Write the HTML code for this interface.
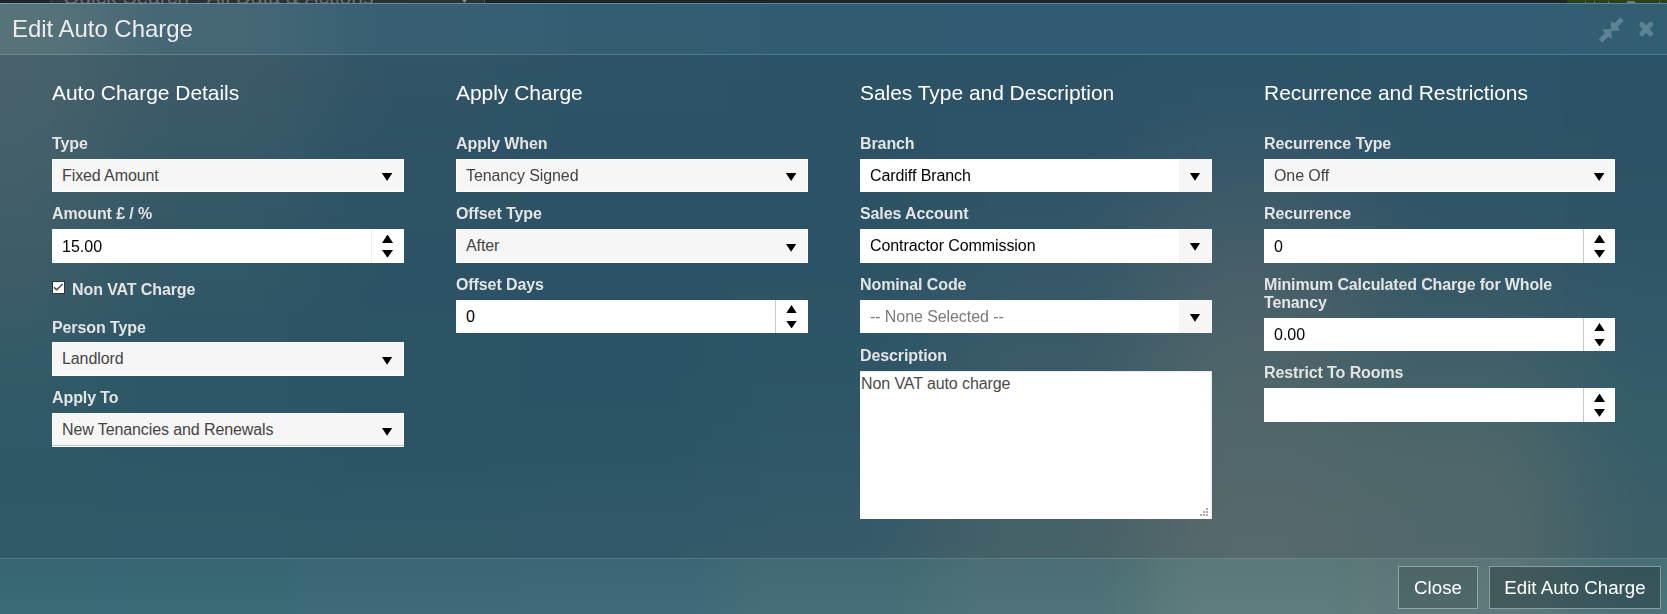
<!DOCTYPE html>
<html><head><meta charset="utf-8">
<style>
*{box-sizing:border-box;margin:0;padding:0}
html,body{width:1667px;height:614px;overflow:hidden}
body{font-family:"Liberation Sans",sans-serif;position:relative;background:#2f5467}
#top{position:absolute;left:0;top:0;width:1667px;height:3px;background:#1f2327}
#top .qs{position:absolute;left:50px;top:0;width:435px;height:3px;background:#2d3033;overflow:hidden;border-left:1px solid #3c3f42}
#top .green{position:absolute;left:1567px;top:0;width:100px;height:3px;background:#2b4013}
#tline{position:absolute;left:0;top:3px;width:1667px;height:1px;background:linear-gradient(90deg,#73a0af 0px,#6194ac 208px,#548da8 417px,#4f8ba8 625px,#4b89a8 833px,#4b89a9 1667px)}
#hline{position:absolute;left:0;top:54px;width:1667px;height:1px;background:rgba(180,210,220,0.23)}
#fline{position:absolute;left:0;top:558px;width:1667px;height:1px;background:rgba(180,210,220,0.26)}
.title{position:absolute;left:12px;top:15px;font-size:24px;line-height:28px;color:#ececec;white-space:nowrap;letter-spacing:-0.04px}
.h{position:absolute;font-size:21px;line-height:24px;color:#fff;white-space:nowrap;letter-spacing:-0.04px}
.lb{position:absolute;margin-top:1px;font-size:16px;font-weight:bold;line-height:18px;color:#e4e4e4;white-space:nowrap;letter-spacing:-0.1px}
.sel{position:absolute;width:352px;height:33px;background:#f6f6f6;border:1px solid #fff}
.sel span{position:absolute;left:9px;top:7px;font-size:16px;line-height:18px;color:#444;white-space:nowrap;letter-spacing:-0.1px}
.tri{position:absolute;width:10.6px;height:8px;background:#000;clip-path:polygon(0 0,100% 0,50% 100%)}
.sel .tri{left:328.8px;top:13px}
.num{position:absolute;width:352px;height:34px;background:#fff}
.sel.h34 .tri{top:13.8px}
.num.h33 span{top:8px}
.num.h33 .up{top:5px}
.num.h33 .dn{top:20.6px}
.num span{position:absolute;left:10px;top:9px;font-size:16px;line-height:18px;color:#000;white-space:nowrap}
.num .div{position:absolute;left:319px;top:0;width:1px;height:100%;background:#efefef}
.num.dk .div{background:#c9c9c9}
.num .up{position:absolute;left:330px;top:5.6px;width:11px;height:8.4px;background:#000;clip-path:polygon(50% 0,100% 100%,0 100%)}
.num .dn{position:absolute;left:330px;top:21px;width:11px;height:7.8px;background:#000;clip-path:polygon(0 0,100% 0,50% 100%)}
.kd{position:absolute;width:352px;height:33px;background:#fff}
.kd span{position:absolute;left:10px;top:8px;font-size:16px;line-height:18px;color:#000;white-space:nowrap;letter-spacing:-0.08px}
.kd .arr{position:absolute;left:319px;top:0;width:33px;height:100%;background:#f6f6f6}
.kd .tri{left:10.7px;top:13.8px}
.btn{position:absolute;top:566px;height:43px;border:1px solid rgba(200,215,215,0.55);color:#fff;font-size:18.7px;line-height:41px;text-align:center;white-space:nowrap}
.band{position:absolute;left:0;width:1667px;overflow:hidden}
.blur{position:absolute;left:0;top:0;width:1667px;height:100%}
.blur i{position:absolute;display:block}
</style></head><body>
<div class="band" style="top:4px;height:51px"><div class="blur" style="filter:blur(40px)">
<i style="left:-400px;top:-400px;width:505px;height:852px;background:#577379"></i>
<i style="left:104px;top:-400px;width:209px;height:852px;background:#456776"></i>
<i style="left:313px;top:-400px;width:209px;height:852px;background:#386072"></i>
<i style="left:521px;top:-400px;width:209px;height:852px;background:#335e72"></i>
<i style="left:729px;top:-400px;width:209px;height:852px;background:#305c72"></i>
<i style="left:938px;top:-400px;width:209px;height:852px;background:#2f5c73"></i>
<i style="left:1146px;top:-400px;width:209px;height:852px;background:#305c73"></i>
<i style="left:1354px;top:-400px;width:209px;height:852px;background:#305d73"></i>
<i style="left:1563px;top:-400px;width:505px;height:852px;background:#325e74"></i>
</div></div>
<div class="band" style="top:55px;height:504px"><div class="blur" style="filter:blur(45px)">
<i style="left:-400px;top:-400px;width:505px;height:456px;background:#48626a"></i>
<i style="left:104px;top:-400px;width:209px;height:456px;background:#3d5b68"></i>
<i style="left:313px;top:-400px;width:209px;height:456px;background:#325567"></i>
<i style="left:521px;top:-400px;width:209px;height:456px;background:#2f5366"></i>
<i style="left:729px;top:-400px;width:209px;height:456px;background:#2d5266"></i>
<i style="left:938px;top:-400px;width:209px;height:456px;background:#2d5266"></i>
<i style="left:1146px;top:-400px;width:209px;height:456px;background:#2d5366"></i>
<i style="left:1354px;top:-400px;width:209px;height:456px;background:#2c5366"></i>
<i style="left:1563px;top:-400px;width:505px;height:456px;background:#2b5265"></i>
<i style="left:-400px;top:55px;width:505px;height:101px;background:#43606a"></i>
<i style="left:104px;top:55px;width:209px;height:101px;background:#365867"></i>
<i style="left:313px;top:55px;width:209px;height:101px;background:#2e5365"></i>
<i style="left:521px;top:55px;width:209px;height:101px;background:#2c5265"></i>
<i style="left:729px;top:55px;width:209px;height:101px;background:#2c5265"></i>
<i style="left:938px;top:55px;width:209px;height:101px;background:#2e5366"></i>
<i style="left:1146px;top:55px;width:209px;height:101px;background:#35576a"></i>
<i style="left:1354px;top:55px;width:209px;height:101px;background:#2e5466"></i>
<i style="left:1563px;top:55px;width:505px;height:101px;background:#2c5365"></i>
<i style="left:-400px;top:155px;width:505px;height:101px;background:#3e5c68"></i>
<i style="left:104px;top:155px;width:209px;height:101px;background:#335766"></i>
<i style="left:313px;top:155px;width:209px;height:101px;background:#2c5365"></i>
<i style="left:521px;top:155px;width:209px;height:101px;background:#2b5265"></i>
<i style="left:729px;top:155px;width:209px;height:101px;background:#2c5365"></i>
<i style="left:938px;top:155px;width:209px;height:101px;background:#345768"></i>
<i style="left:1146px;top:155px;width:209px;height:101px;background:#465e68"></i>
<i style="left:1354px;top:155px;width:209px;height:101px;background:#335667"></i>
<i style="left:1563px;top:155px;width:505px;height:101px;background:#2f5567"></i>
<i style="left:-400px;top:255px;width:505px;height:101px;background:#335a68"></i>
<i style="left:104px;top:255px;width:209px;height:101px;background:#2d5666"></i>
<i style="left:313px;top:255px;width:209px;height:101px;background:#2b5465"></i>
<i style="left:521px;top:255px;width:209px;height:101px;background:#2a5465"></i>
<i style="left:729px;top:255px;width:209px;height:101px;background:#2c5566"></i>
<i style="left:938px;top:255px;width:209px;height:101px;background:#3a5a68"></i>
<i style="left:1146px;top:255px;width:209px;height:101px;background:#4d6469"></i>
<i style="left:1354px;top:255px;width:209px;height:101px;background:#405f69"></i>
<i style="left:1563px;top:255px;width:505px;height:101px;background:#335a69"></i>
<i style="left:-400px;top:355px;width:505px;height:98px;background:#2c5865"></i>
<i style="left:104px;top:355px;width:209px;height:98px;background:#2c5766"></i>
<i style="left:313px;top:355px;width:209px;height:98px;background:#2b5565"></i>
<i style="left:521px;top:355px;width:209px;height:98px;background:#2b5565"></i>
<i style="left:729px;top:355px;width:209px;height:98px;background:#2f5767"></i>
<i style="left:938px;top:355px;width:209px;height:98px;background:#435f68"></i>
<i style="left:1146px;top:355px;width:209px;height:98px;background:#52686a"></i>
<i style="left:1354px;top:355px;width:209px;height:98px;background:#4f6869"></i>
<i style="left:1563px;top:355px;width:505px;height:98px;background:#385e6a"></i>
<i style="left:-400px;top:452px;width:505px;height:452px;background:#2f5a68"></i>
<i style="left:104px;top:452px;width:209px;height:452px;background:#305a68"></i>
<i style="left:313px;top:452px;width:209px;height:452px;background:#325a69"></i>
<i style="left:521px;top:452px;width:209px;height:452px;background:#345a6a"></i>
<i style="left:729px;top:452px;width:209px;height:452px;background:#375a6a"></i>
<i style="left:938px;top:452px;width:209px;height:452px;background:#466268"></i>
<i style="left:1146px;top:452px;width:209px;height:452px;background:#58696a"></i>
<i style="left:1354px;top:452px;width:209px;height:452px;background:#52686a"></i>
<i style="left:1563px;top:452px;width:505px;height:452px;background:#3e5f68"></i>
</div></div>
<div class="band" style="top:559px;height:55px"><div class="blur" style="filter:blur(30px)">
<i style="left:-400px;top:-400px;width:505px;height:430px;background:#346571"></i>
<i style="left:104px;top:-400px;width:209px;height:430px;background:#366572"></i>
<i style="left:313px;top:-400px;width:209px;height:430px;background:#386574"></i>
<i style="left:521px;top:-400px;width:209px;height:430px;background:#396574"></i>
<i style="left:729px;top:-400px;width:209px;height:430px;background:#416973"></i>
<i style="left:938px;top:-400px;width:209px;height:430px;background:#496d73"></i>
<i style="left:1146px;top:-400px;width:209px;height:430px;background:#597776"></i>
<i style="left:1354px;top:-400px;width:209px;height:430px;background:#5a7575"></i>
<i style="left:1563px;top:-400px;width:505px;height:430px;background:#476d75"></i>
<i style="left:-400px;top:29px;width:505px;height:427px;background:#3b6c78"></i>
<i style="left:104px;top:29px;width:209px;height:427px;background:#3d6c79"></i>
<i style="left:313px;top:29px;width:209px;height:427px;background:#3f6c7b"></i>
<i style="left:521px;top:29px;width:209px;height:427px;background:#406c7b"></i>
<i style="left:729px;top:29px;width:209px;height:427px;background:#48707a"></i>
<i style="left:938px;top:29px;width:209px;height:427px;background:#50747a"></i>
<i style="left:1146px;top:29px;width:209px;height:427px;background:#607e7d"></i>
<i style="left:1354px;top:29px;width:209px;height:427px;background:#617c7c"></i>
<i style="left:1563px;top:29px;width:505px;height:427px;background:#4e747c"></i>
</div></div>
<div id="top"><div class="qs"><span style="position:absolute;left:12px;top:-15px;font-size:21px;line-height:24px;color:#6e6e6e;white-space:nowrap">Quick Search - All Data &amp; Actions</span><i style="position:absolute;left:409px;top:-3px;width:9px;height:6px;background:#8a8a8a;clip-path:polygon(0 0,100% 0,50% 100%)"></i><i style="position:absolute;left:433px;top:0;width:1px;height:3px;background:#4a4c4e"></i></div><div class="green"><i style="position:absolute;left:18px;top:1px;width:1px;height:2px;background:#8a6c3a"></i><i style="position:absolute;left:27px;top:1px;width:1px;height:2px;background:#8a6c3a"></i><i style="position:absolute;left:41px;top:1px;width:1px;height:2px;background:#8a6c3a"></i><i style="position:absolute;left:92px;top:1px;width:1px;height:2px;background:#8a6c3a"></i><i style="position:absolute;left:60px;top:1px;width:9px;height:2px;background:#77776c;clip-path:polygon(0 0,80% 0,100% 100%,0 100%)"></i></div></div>
<div id="tline"></div>
<div id="hline"></div>
<div id="fline"></div>
<div class="title">Edit Auto Charge</div>
<svg style="position:absolute;left:1595px;top:14px" width="32" height="32" viewBox="0 0 32 32"><g fill="#5e8193"><polygon points="16,16.8 16,7 19.3,9.3 25.3,3.3 28.8,6.8 22.8,12.8 25,16.8"/><polygon points="16.5,15.3 16.5,25.1 13.2,22.8 7.2,28.8 3.7,25.3 9.7,19.3 7.5,15.3"/></g></svg>
<svg style="position:absolute;left:1634px;top:16px" width="26" height="26" viewBox="0 0 26 26"><g stroke="#5e8193" stroke-width="5.1" stroke-linecap="round"><line x1="7.9" y1="8.4" x2="16.5" y2="17.7"/><line x1="16.5" y1="8.4" x2="7.9" y2="17.7"/></g></svg>

<!-- column 1 -->
<div class="h" style="left:52px;top:80.5px">Auto Charge Details</div>
<div class="lb" style="left:52px;top:134px">Type</div>
<div class="sel" style="left:52px;top:159px"><span>Fixed Amount</span><i class="tri"></i></div>
<div class="lb" style="left:52px;top:204px">Amount £ / %</div>
<div class="num" style="left:52px;top:229px"><span>15.00</span><i class="div"></i><i class="up"></i><i class="dn"></i></div>
<svg style="position:absolute;left:52px;top:281px" width="13" height="13" viewBox="0 0 13 13"><rect x="0.5" y="0.5" width="12" height="12" fill="#fff" stroke="#333" stroke-width="1"/><polyline points="2,6.2 4.6,8.8 10.7,3" fill="none" stroke="#3c3c3c" stroke-width="1.3"/></svg>
<div class="lb" style="left:72px;top:280px">Non VAT Charge</div>
<div class="lb" style="left:52px;top:318px">Person Type</div>
<div class="sel h34" style="left:52px;top:342px;height:34px"><span>Landlord</span><i class="tri"></i></div>
<div class="lb" style="left:52px;top:388px">Apply To</div>
<div class="sel h34" style="left:52px;top:413px;height:34px"><span>New Tenancies and Renewals</span><i class="tri"></i></div>
<div style="position:absolute;left:52px;top:445px;width:352px;height:1px;background:#c6c6c6"></div>

<!-- column 2 -->
<div class="h" style="left:456px;top:80.5px">Apply Charge</div>
<div class="lb" style="left:456px;top:134px">Apply When</div>
<div class="sel" style="left:456px;top:159px"><span>Tenancy Signed</span><i class="tri"></i></div>
<div class="lb" style="left:456px;top:204px">Offset Type</div>
<div class="sel h34" style="left:456px;top:229px;height:34px"><span>After</span><i class="tri"></i></div>
<div class="lb" style="left:456px;top:275px">Offset Days</div>
<div class="num dk h33" style="left:456px;top:300px;height:33px"><span>0</span><i class="div"></i><i class="up"></i><i class="dn"></i></div>

<!-- column 3 -->
<div class="h" style="left:860px;top:80.5px">Sales Type and Description</div>
<div class="lb" style="left:860px;top:134px">Branch</div>
<div class="kd" style="left:860px;top:159px"><span>Cardiff Branch</span><i class="arr"><i class="tri"></i></i></div>
<div class="lb" style="left:860px;top:204px">Sales Account</div>
<div class="kd" style="left:860px;top:229px;height:34px"><span>Contractor Commission</span><i class="arr"><i class="tri"></i></i></div>
<div class="lb" style="left:860px;top:275px">Nominal Code</div>
<div class="kd" style="left:860px;top:300px"><span style="color:#7a7a7e">-- None Selected --</span><i class="arr"><i class="tri"></i></i></div>
<div class="lb" style="left:860px;top:346px">Description</div>
<div style="position:absolute;left:860px;top:371px;width:352px;height:148px;background:#fff;box-shadow:inset 0 1px 0 #e9e9ec,inset -1px 0 0 #e9e9ec">
 <span style="position:absolute;left:1px;top:4px;font-size:16px;line-height:18px;color:#4a4a4a;white-space:nowrap;letter-spacing:-0.1px">Non VAT auto charge</span>
</div>

<svg style="position:absolute;left:1200px;top:508px" width="8" height="8"><g fill="#aaa"><rect x="6" y="0" width="2" height="2"/><rect x="3" y="3" width="2" height="2"/><rect x="6" y="3" width="2" height="2"/><rect x="0" y="6" width="2" height="2"/><rect x="3" y="6" width="2" height="2"/><rect x="6" y="6" width="2" height="2"/></g></svg>
<!-- column 4 -->
<div class="h" style="left:1264px;top:80.5px">Recurrence and Restrictions</div>
<div class="lb" style="left:1264px;top:134px">Recurrence Type</div>
<div class="sel" style="left:1264px;top:159px;width:351px"><span>One Off</span><i class="tri"></i></div>
<div class="lb" style="left:1264px;top:204px">Recurrence</div>
<div class="num dk" style="left:1264px;top:229px;width:351px"><span>0</span><i class="div"></i><i class="up"></i><i class="dn"></i></div>
<div class="lb" style="left:1264px;top:275px;letter-spacing:-0.15px">Minimum Calculated Charge for Whole<br>Tenancy</div>
<div class="num dk h33" style="left:1264px;top:318px;width:351px;height:33px"><span>0.00</span><i class="div"></i><i class="up"></i><i class="dn"></i></div>
<div class="lb" style="left:1264px;top:363px">Restrict To Rooms</div>
<div class="num dk" style="left:1264px;top:388px;width:351px"><i class="div"></i><i class="up"></i><i class="dn"></i></div>

<div class="btn" style="left:1398px;width:80px;background:rgba(25,40,42,0.22)">Close</div>
<div class="btn" style="left:1489px;width:172px;background:rgba(20,35,38,0.36)">Edit Auto Charge</div>
</body></html>
